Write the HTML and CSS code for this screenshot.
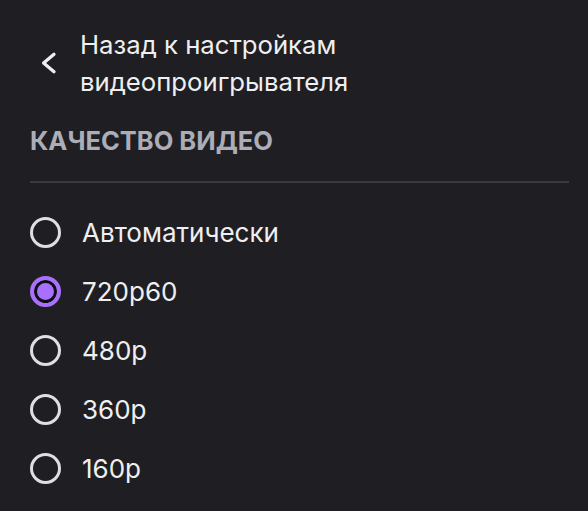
FILE: index.html
```html
<!DOCTYPE html>
<html lang="ru">
<head>
<meta charset="utf-8">
<link rel="stylesheet" href="styles.css">
</head>
<body>
<div class="panel">
  <div class="back">
    <span class="back-icon">
      <svg width="16" height="24" viewBox="0 0 16 24"><path d="M13 3.3 L2.6 12 L13 20.7" fill="none" stroke="#efeff1" stroke-width="3.3" stroke-linecap="round" stroke-linejoin="round"/></svg>
    </span>
    <span class="back-text">Назад к настройкам видеопроигрывателя</span>
  </div>
  <div class="title">КАЧЕСТВО ВИДЕО</div>
  <div class="divider"></div>
  <div class="options">
    <label class="opt"><span class="radio"></span><span class="label">Автоматически</span></label>
    <label class="opt"><span class="radio checked"></span><span class="label">720p60</span></label>
    <label class="opt"><span class="radio"></span><span class="label">480p</span></label>
    <label class="opt"><span class="radio"></span><span class="label">360p</span></label>
    <label class="opt"><span class="radio"></span><span class="label">160p</span></label>
  </div>
</div>
</body>
</html>
```
FILE: styles.css
```css
html, body {
  margin: 0;
  padding: 0;
  background: #1f1f23;
  height: 100%;
}
body {
  font-family: Inter, "Noto Sans", sans-serif;
  color: #efeff1;
}
.panel {
  padding: 26px 19px 0 30px;
}
.back {
  display: flex;
  align-items: center;
}
.back-icon {
  width: 50px;
  display: flex;
  justify-content: flex-start;
  padding-left: 11px;
  box-sizing: border-box;
}
.back-text {
  font-size: 25.7px;
  line-height: 37px;
  width: 320px;
}
.title {
  margin-top: 26px;
  font-size: 25.5px;
  line-height: 30px;
  font-weight: 700;
  color: #adadb8;
}
.divider {
  margin-top: 25px;
  height: 2px;
  background: #3a3a3e;
}
.options {
  margin-top: 20px;
  display: flex;
  flex-direction: column;
}
.opt {
  height: 59px;
  display: flex;
  align-items: center;
}
.radio {
  width: 31px;
  height: 31px;
  box-sizing: border-box;
  border-radius: 50%;
  border: 3px solid #dedee3;
  margin-right: 21px;
  flex: none;
}
.radio.checked {
  border: 4px solid #a970ff;
  background: #a970ff;
  box-shadow: inset 0 0 0 3px #0e0e10;
}
.label {
  font-size: 26px;
  line-height: 30px;
}
```
